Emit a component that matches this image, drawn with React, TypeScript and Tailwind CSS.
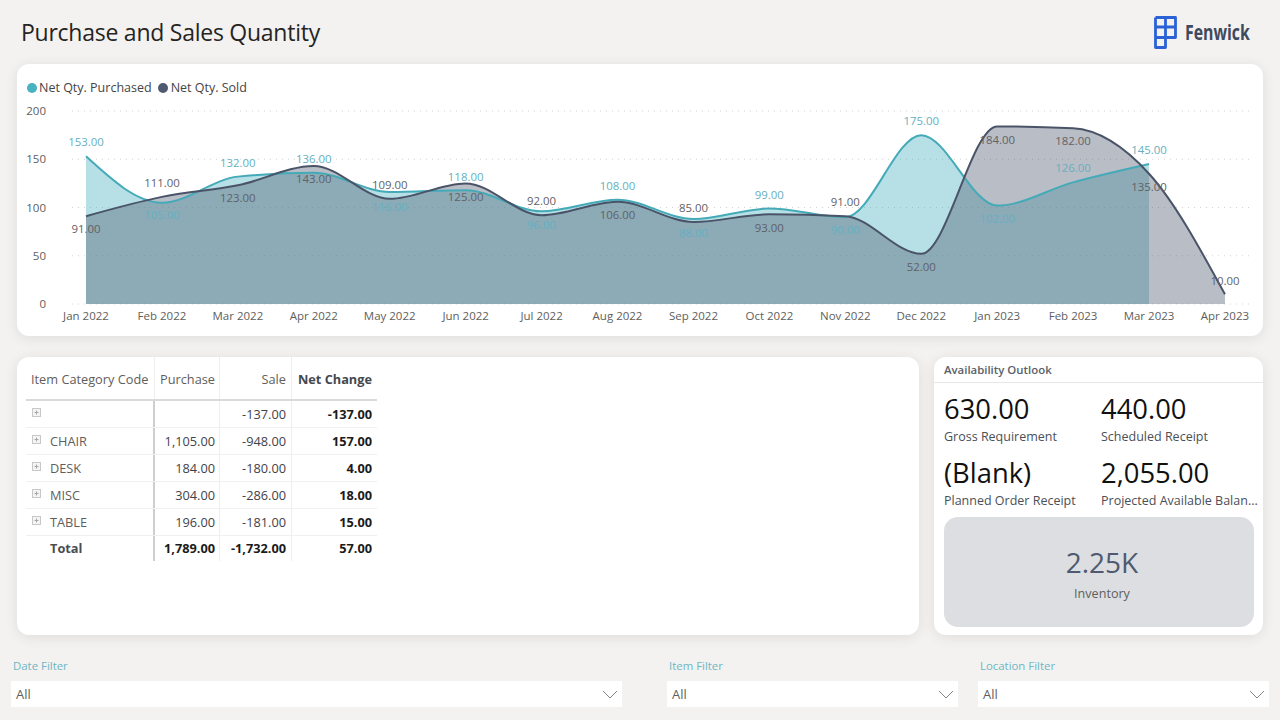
const PURCHASED = [153, 105, 132, 136, 116, 118, 96, 108, 88, 99, 90, 175, 102, 126, 145];
const SOLD = [91, 111, 123, 143, 109, 125, 92, 106, 85, 93, 91, 52, 184, 182, 135, 10];
const MONTHS = [
  'Jan 2022', 'Feb 2022', 'Mar 2022', 'Apr 2022', 'May 2022', 'Jun 2022', 'Jul 2022', 'Aug 2022',
  'Sep 2022', 'Oct 2022', 'Nov 2022', 'Dec 2022', 'Jan 2023', 'Feb 2023', 'Mar 2023', 'Apr 2023',
];

// label y positions read off the picture, chart coordinates
const PURCHASED_LABEL_Y = [142, 215, 163, 159, 207, 177, 225, 186, 233, 195, 230, 121, 219, 168, 150];
const SOLD_LABEL_Y = [229, 183, 198, 179, 185, 197, 201, 215, 208, 228, 202, 267, 140, 141, 187, 281];

const X0 = 86;
const STEP = 75.93;
const BASE = 304;
const UNIT = 0.965;

const px = (i: number) => X0 + i * STEP;
const py = (v: number) => BASE - v * UNIT;

// monotone cubic, same shape Power BI draws for a smooth line
function smoothPath(values: number[]) {
  const pts = values.map((v, i) => [px(i), py(v)]);
  const n = pts.length;
  const slopes: number[] = [];
  for (let i = 0; i < n - 1; i++) slopes.push((pts[i + 1][1] - pts[i][1]) / STEP);
  const tangents = new Array<number>(n).fill(0);
  for (let i = 1; i < n - 1; i++) {
    const a = slopes[i - 1];
    const b = slopes[i];
    if (a * b <= 0) continue;
    const sign = a > 0 ? 1 : -1;
    tangents[i] = sign * Math.min(2 * Math.abs(a), 2 * Math.abs(b), Math.abs(a + b) / 2);
  }
  tangents[0] = (3 * slopes[0] - tangents[1]) / 2;
  tangents[n - 1] = (3 * slopes[n - 2] - tangents[n - 2]) / 2;
  let d = `M${pts[0][0]} ${pts[0][1]}`;
  const h = STEP / 3;
  for (let i = 0; i < n - 1; i++) {
    d += ` C${pts[i][0] + h} ${pts[i][1] + tangents[i] * h} ${pts[i + 1][0] - h} ${pts[i + 1][1] - tangents[i + 1] * h} ${pts[i + 1][0]} ${pts[i + 1][1]}`;
  }
  return d;
}

function areaPath(values: number[]) {
  return `${smoothPath(values)} L${px(values.length - 1)} ${BASE} L${X0} ${BASE} Z`;
}

function AreaChart() {
  return (
    <svg width="1246" height="272" viewBox="17 64 1246 272" className="block">
      {[200, 150, 100, 50, 0].map((tick) => (
        <g key={tick}>
          <line x1="72" x2="1252" y1={py(tick)} y2={py(tick)} stroke="#d2d2d2" strokeWidth="1" strokeDasharray="1 5" />
          <text x="46" y={py(tick) + 4} textAnchor="end" fontSize="11.5" fill="#605e5c">{tick}</text>
        </g>
      ))}
      <path d={areaPath(PURCHASED)} fill="#49b2c0" fillOpacity="0.4" />
      <path d={areaPath(SOLD)} fill="#4f5a70" fillOpacity="0.4" />
      <path d={smoothPath(PURCHASED)} fill="none" stroke="#45aab8" strokeWidth="2" />
      <path d={smoothPath(SOLD)} fill="none" stroke="#4a5468" strokeWidth="2" />
      {PURCHASED.map((v, i) => (
        <text key={i} x={px(i)} y={PURCHASED_LABEL_Y[i] + 4} textAnchor="middle" fontSize="11.4" fill="#66b0c0">{v.toFixed(2)}</text>
      ))}
      {SOLD.map((v, i) => (
        <text key={i} x={px(i)} y={SOLD_LABEL_Y[i] + 4} textAnchor="middle" fontSize="11.4" fill="#5f6266">{v.toFixed(2)}</text>
      ))}
      {MONTHS.map((m, i) => (
        <text key={m} x={px(i)} y="319.5" textAnchor="middle" fontSize="11.5" fill="#605e5c">{m}</text>
      ))}
    </svg>
  );
}

function FenwickLogo() {
  return (
    <div className="flex items-center gap-[8px]">
      <svg width="23" height="33" viewBox="0 0 23 33" fill="none" stroke="#2b62d6" strokeWidth="2.8" strokeLinejoin="round">
        <path d="M1.5 1.5H21.5V21.5H11.5V31.5H1.5V1.5M11.5 1.5V21.5M1.5 11H21.5M1.5 21.5H11.5" />
      </svg>
      <span className="text-[22px] font-bold text-[#3e4a5e] leading-none scale-x-[0.72] origin-left w-[65px] whitespace-nowrap -mt-[2px]">Fenwick</span>
    </div>
  );
}

const ROWS = [
  { code: '', purchase: '', sale: '-137.00', net: '-137.00' },
  { code: 'CHAIR', purchase: '1,105.00', sale: '-948.00', net: '157.00' },
  { code: 'DESK', purchase: '184.00', sale: '-180.00', net: '4.00' },
  { code: 'MISC', purchase: '304.00', sale: '-286.00', net: '18.00' },
  { code: 'TABLE', purchase: '196.00', sale: '-181.00', net: '15.00' },
];

function PlusBox() {
  return (
    <svg width="9" height="9" viewBox="0 0 9 9" className="mt-[-5px] shrink-0">
      <rect x="0.5" y="0.5" width="8" height="8" fill="#f4f4f4" stroke="#c8c8c8" />
      <path d="M2.5 4.5H6.5M4.5 2.5V6.5" stroke="#a8a8a8" />
    </svg>
  );
}

function CategoryTable() {
  return (
    <div className="w-[351px] text-[12.75px] leading-none">
      <div className="flex h-[44px] border-b-2 border-[#d9d9d9] text-[#605e5c]">
        <div className="w-[129px] pl-[5px] pt-[16px] border-r border-[#eeeeee] whitespace-nowrap">Item Category Code</div>
        <div className="w-[65px] pr-[4px] pt-[16px] text-right border-r border-[#eeeeee]">Purchase</div>
        <div className="w-[72px] pr-[5px] pt-[16px] text-right border-r border-[#eeeeee]">Sale</div>
        <div className="w-[85px] pr-[5px] pt-[16px] text-right font-bold text-[#44484f]">Net Change</div>
      </div>
      {ROWS.map((row) => (
        <div key={row.code} className="flex h-[27px] items-center border-b border-[#f0f0f0] text-[#3f4248]">
          <div className="w-[129px] h-full pl-[6px] pt-[1px] flex items-center gap-[9px] border-r-2 border-[#cfcfcf] text-[#605e5c]">
            <PlusBox />
            <span>{row.code}</span>
          </div>
          <div className="w-[65px] h-full pr-[4px] pt-[1px] flex items-center justify-end border-r border-[#eeeeee]">{row.purchase}</div>
          <div className="w-[72px] h-full pr-[5px] pt-[1px] flex items-center justify-end border-r border-[#eeeeee]">{row.sale}</div>
          <div className="w-[85px] h-full pr-[5px] pt-[1px] flex items-center justify-end font-bold text-[#1b1b1b]">{row.net}</div>
        </div>
      ))}
      <div className="flex h-[25px] items-center font-bold text-[#4a4d52]">
        <div className="w-[129px] h-full pl-[24px] flex items-center border-r-2 border-[#cfcfcf]">Total</div>
        <div className="w-[65px] h-full pr-[4px] flex items-center justify-end border-r border-[#eeeeee] text-[#1b1b1b]">1,789.00</div>
        <div className="w-[72px] h-full pr-[5px] flex items-center justify-end border-r border-[#eeeeee] text-[#1b1b1b]">-1,732.00</div>
        <div className="w-[85px] h-full pr-[5px] flex items-center justify-end text-[#1b1b1b]">57.00</div>
      </div>
    </div>
  );
}

function Stat({ value, label }: { value: string; label: string }) {
  return (
    <div className="min-w-0">
      <div className="text-[27.4px] leading-[36px] text-[#111111]">{value}</div>
      <div className="mt-[1px] text-[12.5px] leading-[18px] text-[#4a4f58] whitespace-nowrap">{label}</div>
    </div>
  );
}

function FilterBox({ label, width }: { label: string; width: string }) {
  return (
    <div className={width}>
      <div className="pl-[2px] text-[11.4px] leading-[16px] text-[#6fb6c4] mb-[7px]">{label}</div>
      <div className="h-[26px] bg-white flex items-center justify-between pl-[5px] pr-[4px] text-[13px] text-[#605e5c]">
        <span className="pt-[1px]">All</span>
        <svg width="16" height="9" viewBox="0 0 16 9" fill="none" stroke="#858585" strokeWidth="1">
          <path d="M1 1L8 8L15 1" />
        </svg>
      </div>
    </div>
  );
}

export default function App() {
  return (
    <div className="w-[1280px] h-[720px] overflow-hidden bg-[#f3f2f1] flex flex-col" style={{ fontFamily: '"Open Sans", sans-serif' }}>
      <header className="h-[64px] shrink-0 flex items-center justify-between pl-[21px] pr-[30px]">
        <h1 className="text-[23px] tracking-[-0.25px] text-[#252423] leading-none">Purchase and Sales Quantity</h1>
        <FenwickLogo />
      </header>

      <section className="mx-[17px] h-[272px] shrink-0 bg-white rounded-[12px] shadow-[0_2px_14px_rgba(0,0,0,0.09)] relative">
        <div className="absolute left-[10px] top-[18px] flex items-center gap-[6px] text-[12.5px] text-[#444444] leading-none">
          <span className="w-[10px] h-[10px] rounded-full bg-[#49b2c0]" />
          <span className="-ml-[4px]">Net Qty. Purchased</span>
          <span className="w-[10px] h-[10px] rounded-full bg-[#4f5a70]" />
          <span className="-ml-[3px]">Net Qty. Sold</span>
        </div>
        <AreaChart />
      </section>

      <div className="mx-[17px] mt-[21px] h-[278px] shrink-0 flex gap-[15px]">
        <section className="flex-1 bg-white rounded-[12px] shadow-[0_2px_14px_rgba(0,0,0,0.09)] pl-[9px]">
          <CategoryTable />
        </section>
        <section className="w-[329px] bg-white rounded-[12px] shadow-[0_2px_14px_rgba(0,0,0,0.09)] flex flex-col">
          <div className="h-[26px] shrink-0 border-b border-[#e6e6e6] pl-[10px] pt-[1px] flex items-center text-[11.4px] font-semibold text-[#5a5f68]">Availability Outlook</div>
          <div className="grid grid-cols-[157px_1fr] pl-[10px] pt-[8px] gap-y-[9px]">
            <Stat value="630.00" label="Gross Requirement" />
            <Stat value="440.00" label="Scheduled Receipt" />
            <Stat value="(Blank)" label="Planned Order Receipt" />
            <Stat value="2,055.00" label="Projected Available Balan..." />
          </div>
          <div className="ml-[10px] w-[310px] mt-[7px] h-[110px] rounded-[14px] bg-[#dddee2] flex flex-col items-center pt-[27px] pl-[6px]">
            <div className="text-[28px] leading-[36px] text-[#4f5a70]">2.25K</div>
            <div className="text-[12.6px] leading-[18px] mt-[5px] text-[#605e5c]">Inventory</div>
          </div>
        </section>
      </div>

      <div className="mt-[23px] pl-[11px] flex">
        <FilterBox label="Date Filter" width="w-[611px]" />
        <div className="w-[45px]" />
        <FilterBox label="Item Filter" width="w-[291px]" />
        <div className="w-[20px]" />
        <FilterBox label="Location Filter" width="w-[291px]" />
      </div>
    </div>
  );
}
